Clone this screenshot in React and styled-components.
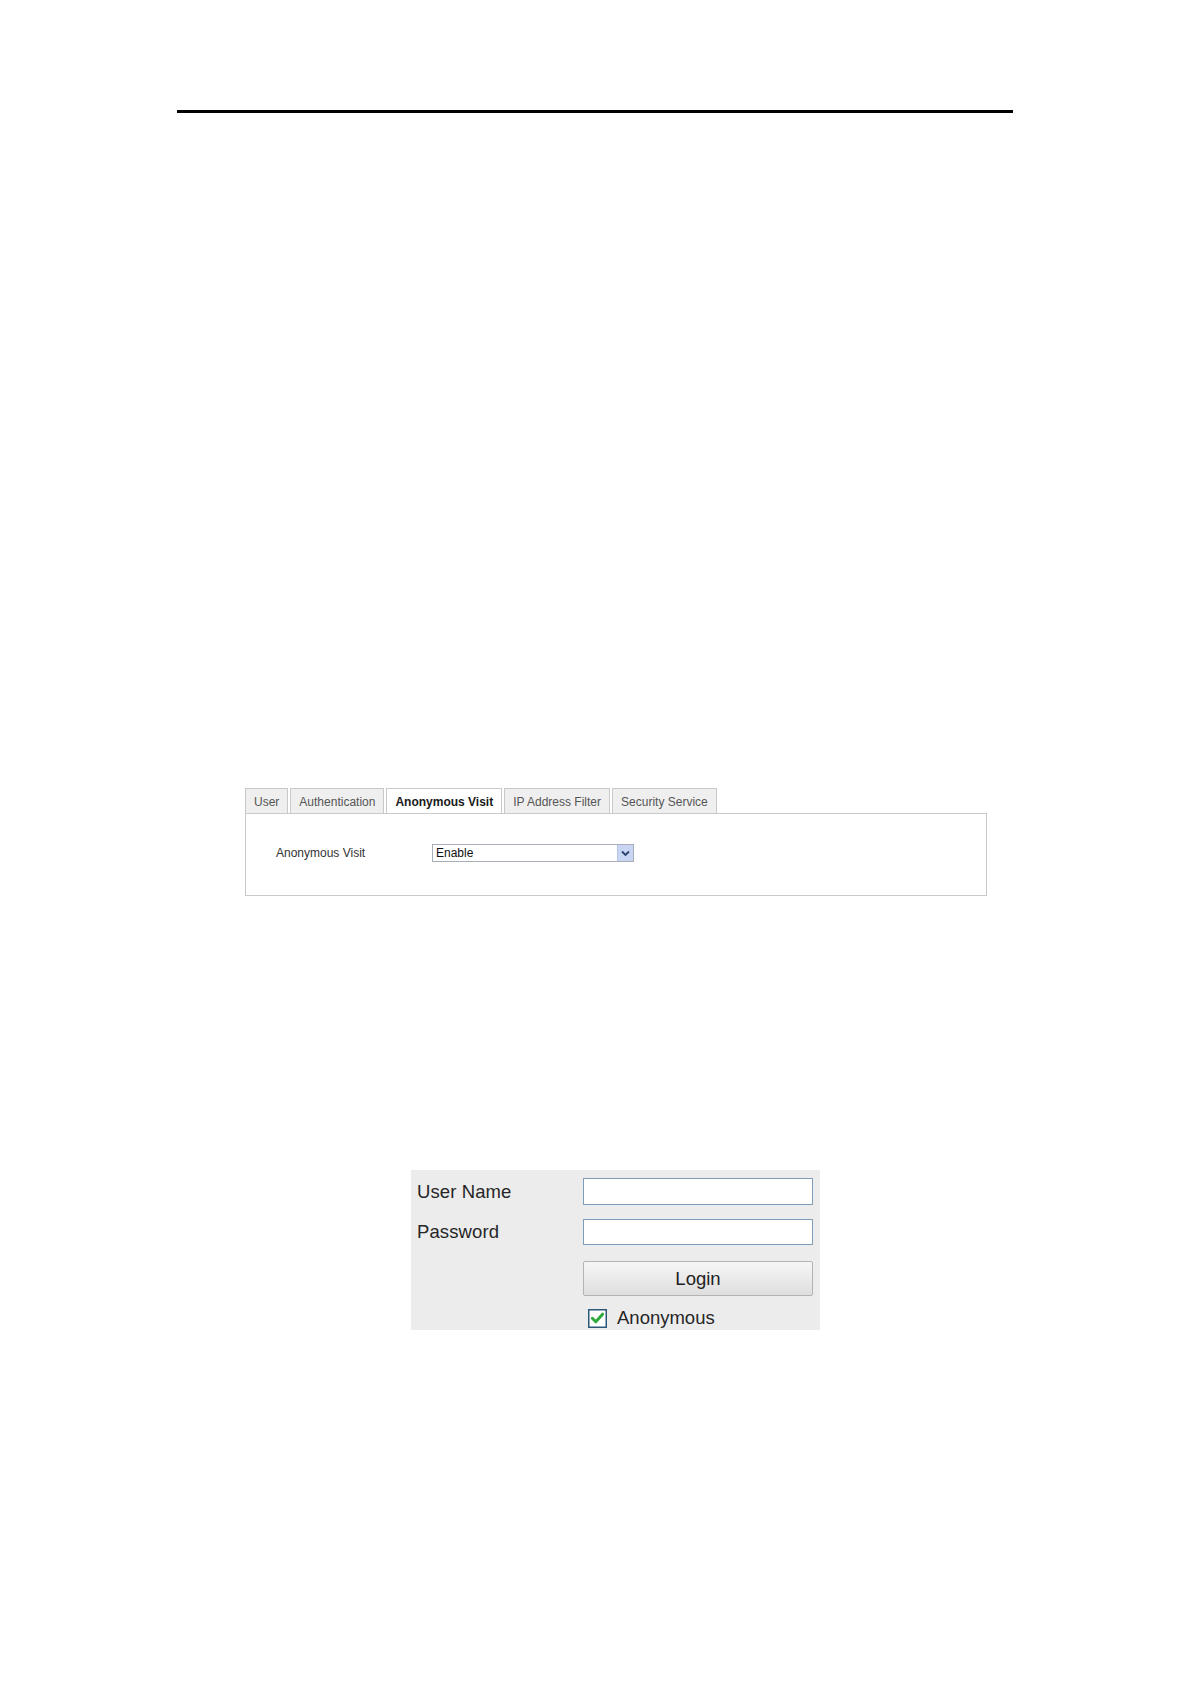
import React from 'react'
import styled, { createGlobalStyle } from 'styled-components'

const GlobalStyle = createGlobalStyle`
	body {
		margin: 0;
		background: #fff;
		font-family: 'Liberation Sans', Arial, sans-serif;
	}
`

const Page = styled.div`
	width: 1191px;
	min-height: 1684px;
	padding-top: 110px;
	box-sizing: border-box;
	background: #fff;
`

const Rule = styled.div`
	margin-left: 177px;
	width: 836px;
	height: 3px;
	background: #000;
`

const TabsSection = styled.section`
	margin: 675px 0 0 245px;
	width: 742px;
`

const TabStrip = styled.div`
	display: flex;
	gap: 2px;
	height: 25px;
	align-items: stretch;
`

const Tab = styled.div`
	display: flex;
	align-items: center;
	padding: 1px 8px 0 8px;
	border: 1px solid #c9c9c9;
	border-bottom: none;
	background: ${(p) => (p.$active ? '#fff' : '#efefef')};
	color: ${(p) => (p.$active ? '#1a1a1a' : '#555')};
	font-weight: ${(p) => (p.$active ? 'bold' : 'normal')};
	font-size: 12px;
	box-sizing: border-box;
`

const Panel = styled.div`
	height: 83px;
	box-sizing: border-box;
	border: 1px solid #c9c9c9;
	display: flex;
	align-items: center;
	padding: 0 0 3px 30px;
`

const FieldLabel = styled.span`
	width: 156px;
	font-size: 12px;
	color: #333;
`

const Select = styled.div`
	width: 202px;
	height: 18px;
	box-sizing: border-box;
	border: 1px solid #a7aeb8;
	display: flex;
	align-items: center;
	justify-content: space-between;
	padding-left: 3px;
	font-size: 12px;
	color: #111;
	background: #fff;
`

const SelectArrow = styled.div`
	width: 16px;
	height: 16px;
	background: #c8d6f4;
	border-left: 1px solid #b9c7e6;
	display: flex;
	align-items: center;
	justify-content: center;
	box-sizing: border-box;
`

const LoginBox = styled.div`
	margin: 274px 0 0 411px;
	width: 409px;
	height: 160px;
	box-sizing: border-box;
	background: #ececec;
	padding: 8px 7px 0 6px;
	display: flex;
	flex-direction: column;
	overflow: hidden;
`

const FormRow = styled.div`
	display: flex;
	align-items: center;
	margin-top: ${(p) => p.$gap || 0}px;
`

const LoginLabel = styled.label`
	width: 166px;
	font-size: 18.5px;
	color: #262626;
	letter-spacing: 0.1px;
`

const TextInput = styled.input`
	width: 230px;
	height: ${(p) => p.$h || 27}px;
	box-sizing: border-box;
	border: 1px solid #7f9db9;
	background: #fff;
	outline: none;
	padding: 0 4px;
	font-family: inherit;
`

const LoginButton = styled.button`
	width: 230px;
	height: 35px;
	box-sizing: border-box;
	border: 1px solid #b3b3b3;
	border-radius: 2px;
	background: linear-gradient(#f6f6f6, #dedede);
	font-family: 'Liberation Sans', Arial, sans-serif;
	font-size: 18.5px;
	color: #222;
	cursor: pointer;
	padding: 0;
`

const CheckRow = styled.label`
	display: flex;
	align-items: center;
	gap: 10px;
	margin-left: 5px;
	font-size: 18.5px;
	color: #262626;
`

const CheckBox = () => (
	<svg width='19' height='19' viewBox='0 0 19 19'>
		<rect x='0.75' y='0.75' width='17.5' height='17.5' fill='#fff' stroke='#2c5878' strokeWidth='1.5' />
		<path d='M4.3 9.3 L7.8 12.8 L14.6 5.2' fill='none' stroke='#2faa3c' strokeWidth='3' strokeLinecap='round' strokeLinejoin='round' />
	</svg>
)

const tabs = ['User', 'Authentication', 'Anonymous Visit', 'IP Address Filter', 'Security Service']

const App = () => (
	<Page>
		<GlobalStyle />
		<Rule />

		<TabsSection>
			<TabStrip>
				{tabs.map((t) => (
					<Tab key={t} $active={t === 'Anonymous Visit'}>
						{t}
					</Tab>
				))}
			</TabStrip>
			<Panel>
				<FieldLabel>Anonymous Visit</FieldLabel>
				<Select>
					<span>Enable</span>
					<SelectArrow>
						<svg width='9' height='7' viewBox='0 0 9 7'>
							<path d='M1 1.5 L4.5 5 L8 1.5' fill='none' stroke='#2a3f6e' strokeWidth='1.8' />
						</svg>
					</SelectArrow>
				</Select>
			</Panel>
		</TabsSection>

		<LoginBox>
			<FormRow>
				<LoginLabel>User Name</LoginLabel>
				<TextInput $h={27} />
			</FormRow>
			<FormRow $gap={14}>
				<LoginLabel>Password</LoginLabel>
				<TextInput type='password' $h={26} />
			</FormRow>
			<FormRow $gap={16}>
				<LoginLabel />
				<LoginButton>Login</LoginButton>
			</FormRow>
			<FormRow $gap={11}>
				<LoginLabel />
				<CheckRow>
					<CheckBox />
					Anonymous
				</CheckRow>
			</FormRow>
		</LoginBox>
	</Page>
)

export default App
